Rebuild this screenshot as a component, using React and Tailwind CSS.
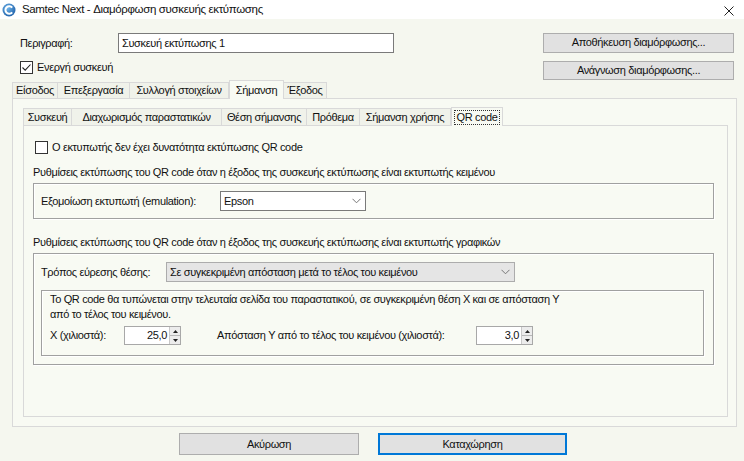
import React from 'react';

const font = { fontFamily: '"Liberation Sans", Arial, sans-serif' };

function Chevron() {
    return (
        <svg width="9" height="6" viewBox="0 0 9 6" className="shrink-0">
            <path d="M0.5 0.8 L4.5 4.8 L8.5 0.8" fill="none" stroke="#777" strokeWidth="1" />
        </svg>
    );
}

function CheckBox({ checked }) {
    return (
        <div className="w-[13px] h-[13px] border border-[#333] bg-white flex items-center justify-center shrink-0">
            {checked && (
                <svg width="11" height="11" viewBox="0 0 11 11">
                    <path d="M1.5 5.5 L4.2 8.2 L9.5 2.5" fill="none" stroke="#222" strokeWidth="1.1" />
                </svg>
            )}
        </div>
    );
}

function Spinner({ value }) {
    return (
        <div className="flex h-[19px] w-[57px] border border-[#a8a8a8] bg-white shrink-0">
            <div className="flex-1 text-right pr-[2px] leading-[17px]">{value}</div>
            <div className="w-[11px] flex flex-col border-l border-[#c8c8c8]">
                <div className="flex-1 flex items-center justify-center bg-[#ececec] border-b border-[#b8b8b8]">
                    <svg width="5" height="3" viewBox="0 0 5 3"><path d="M0 3 L2.5 0 L5 3 Z" fill="#222" /></svg>
                </div>
                <div className="flex-1 flex items-center justify-center bg-[#ececec]">
                    <svg width="5" height="3" viewBox="0 0 5 3"><path d="M0 0 L2.5 3 L5 0 Z" fill="#222" /></svg>
                </div>
            </div>
        </div>
    );
}

const outerTabs = [
    { label: 'Είσοδος', w: 'w-[46px]' },
    { label: 'Επεξεργασία', w: 'w-[72px]' },
    { label: 'Συλλογή στοιχείων', w: 'w-[99px]' },
    { label: 'Σήμανση', w: 'w-[55px]', active: true },
    { label: 'Έξοδος', w: 'w-[43px]' },
];

const innerTabs = [
    { label: 'Συσκευή', w: 'w-[49px]' },
    { label: 'Διαχωρισμός παραστατικών', w: 'w-[150px]' },
    { label: 'Θέση σήμανσης', w: 'w-[85px]' },
    { label: 'Πρόθεμα', w: 'w-[53px]' },
    { label: 'Σήμανση χρήσης', w: 'w-[91px]' },
    { label: 'QR code', w: 'w-[52px]', active: true },
];

export default function App() {
    return (
        <div className="w-[744px] h-[461px] bg-[#f5f7ef] text-[11px] tracking-[-0.35px] text-[#111] overflow-hidden whitespace-nowrap" style={font}>
            {/* title bar */}
            <div className="h-[19px] bg-white flex items-center pl-[2px] pr-[10px]">
                <svg width="14" height="14" viewBox="0 0 14 14" className="shrink-0">
                    <defs>
                        <radialGradient id="lg" cx="0.4" cy="0.35" r="0.7">
                            <stop offset="0" stopColor="#6fb4ea" />
                            <stop offset="1" stopColor="#1d5fa8" />
                        </radialGradient>
                    </defs>
                    <circle cx="7" cy="7" r="6.5" fill="url(#lg)" />
                    <path d="M10.2 4.6 A3.8 3.8 0 1 0 10.2 9.4" fill="none" stroke="#fff" strokeWidth="2" />
                </svg>
                <span className="ml-[6px] leading-none text-[11.5px]">Samtec Next - Διαμόρφωση συσκευής εκτύπωσης</span>
                <svg width="10" height="10" viewBox="0 0 10 10" className="ml-auto mt-[2px]">
                    <path d="M0.5 0.5 L9.5 9.5 M9.5 0.5 L0.5 9.5" stroke="#222" strokeWidth="1" />
                </svg>
            </div>

            {/* header */}
            <div className="h-[61px] flex justify-between pt-[14px] pl-[20px] pr-[10px]">
                <div className="flex flex-col">
                    <div className="flex items-center h-[20px]">
                        <span className="w-[98px]">Περιγραφή:</span>
                        <div className="w-[276px] h-[20px] bg-white border border-[#7a7a7a] pl-[3px] leading-[18px]">Συσκευή εκτύπωσης 1</div>
                    </div>
                    <div className="flex items-center mt-[8px] h-[13px]">
                        <CheckBox checked />
                        <span className="ml-[4px]">Ενεργή συσκευή</span>
                    </div>
                </div>
                <div className="flex flex-col gap-[8px]">
                    <button className="w-[191px] h-[22px] bg-[#e1e1e1] border border-[#adadad] leading-none">Αποθήκευση διαμόρφωσης...</button>
                    <button className="w-[191px] h-[22px] bg-[#e1e1e1] border border-[#adadad] leading-none">Ανάγνωση διαμόρφωσης...</button>
                </div>
            </div>

            {/* outer tabs */}
            <div className="ml-[12px] mr-[7px]">
                <div className="flex items-end h-[18px]">
                    {outerTabs.map((t) => (
                        <div
                            key={t.label}
                            className={
                                t.active
                                    ? `${t.w} h-[19px] -mb-px relative z-10 bg-[#f8faf3] border border-b-0 border-[#d9d9d9] flex items-center justify-center`
                                    : `${t.w} h-[16px] bg-[#f0f2ea] border border-b-0 border-l-0 first:border-l border-[#d9d9d9] flex items-center justify-center`
                            }
                        >
                            <span className="leading-none">{t.label}</span>
                        </div>
                    ))}
                </div>
                <div className="h-[329px] border border-[#d9d9d9] bg-[#f8faf3] pt-[7px] pl-[10px] pr-[8px]">
                    {/* inner tabs */}
                    <div className="flex items-end h-[19px]">
                        {innerTabs.map((t) => (
                            <div
                                key={t.label}
                                className={
                                    t.active
                                        ? `${t.w} h-[19px] -mb-px relative z-10 bg-[#f8faf3] border border-b-0 border-[#d9d9d9] flex items-center justify-center`
                                        : `${t.w} h-[17px] bg-[#f0f2ea] border border-b-0 border-l-0 first:border-l border-[#d9d9d9] flex items-center justify-center`
                                }
                            >
                                {t.active ? (
                                    <span className="leading-none border border-dotted border-[#333] px-[2px] py-[1px]">{t.label}</span>
                                ) : (
                                    <span className="leading-none">{t.label}</span>
                                )}
                            </div>
                        ))}
                    </div>
                    <div className="h-[292px] border border-[#d9d9d9] bg-[#f8faf3] pl-[9px] pr-[13px] pt-[15px]">
                        <div className="flex items-center h-[13px] ml-[2px]">
                            <CheckBox />
                            <span className="ml-[4px]">Ο εκτυπωτής δεν έχει δυνατότητα εκτύπωσης QR code</span>
                        </div>
                        <div className="mt-[11px] leading-[14px]">Ρυθμίσεις εκτύπωσης του QR code όταν η έξοδος της συσκευής εκτύπωσης είναι εκτυπωτής κειμένου</div>
                        <div className="mt-[4px] h-[36px] border border-[#a0a0a0] shadow-[1px_1px_0_#fff,inset_1px_1px_0_#fff] flex items-center pl-[7px]">
                            <span className="w-[179px]">Εξομοίωση εκτυπωτή (emulation):</span>
                            <div className="w-[146px] h-[20px] bg-white border border-[#7a7a7a] flex items-center pl-[3px] pr-[4px]">
                                <span className="flex-1">Epson</span>
                                <Chevron />
                            </div>
                        </div>
                        <div className="mt-[16px] leading-[14px]">Ρυθμίσεις εκτύπωσης του QR code όταν η έξοδος της συσκευής εκτύπωσης είναι εκτυπωτής γραφικών</div>
                        <div className="mt-[4px] h-[112px] border border-[#a0a0a0] shadow-[1px_1px_0_#fff,inset_1px_1px_0_#fff] pl-[7px] pr-[9px] pt-[8px]">
                            <div className="flex items-center">
                                <span className="w-[125px]">Τρόπος εύρεσης θέσης:</span>
                                <div className="w-[349px] h-[20px] bg-[#e5e5e5] border border-[#acacac] flex items-center pl-[3px] pr-[4px]">
                                    <span className="flex-1">Σε συγκεκριμένη απόσταση μετά το τέλος του κειμένου</span>
                                    <Chevron />
                                </div>
                            </div>
                            <div className="mt-[8px] h-[66px] border border-[#a0a0a0] shadow-[1px_1px_0_#fff,inset_1px_1px_0_#fff] pl-[8px] pt-[1px]">
                                <div className="leading-[15px]">
                                    Το QR code θα τυπώνεται στην τελευταία σελίδα του παραστατικού, σε συγκεκριμένη θέση X και σε απόσταση Y
                                    <br />
                                    από το τέλος του κειμένου.
                                </div>
                                <div className="flex items-center mt-[4px]">
                                    <span className="w-[74px]">X (χιλιοστά):</span>
                                    <Spinner value="25,0" />
                                    <span className="ml-[36px] w-[259px]">Απόσταση Y από το τέλος του κειμένου (χιλιοστά):</span>
                                    <Spinner value="3,0" />
                                </div>
                            </div>
                        </div>
                    </div>
                </div>
            </div>

            {/* bottom buttons */}
            <div className="flex pl-[179px] mt-[6px] gap-[19px]">
                <button className="w-[180px] h-[22px] bg-[#e1e1e1] border border-[#adadad] leading-none">Ακύρωση</button>
                <button className="w-[189px] h-[22px] bg-[#e1e1e1] border-2 border-[#0078d7] leading-none">Καταχώρηση</button>
            </div>
        </div>
    );
}
